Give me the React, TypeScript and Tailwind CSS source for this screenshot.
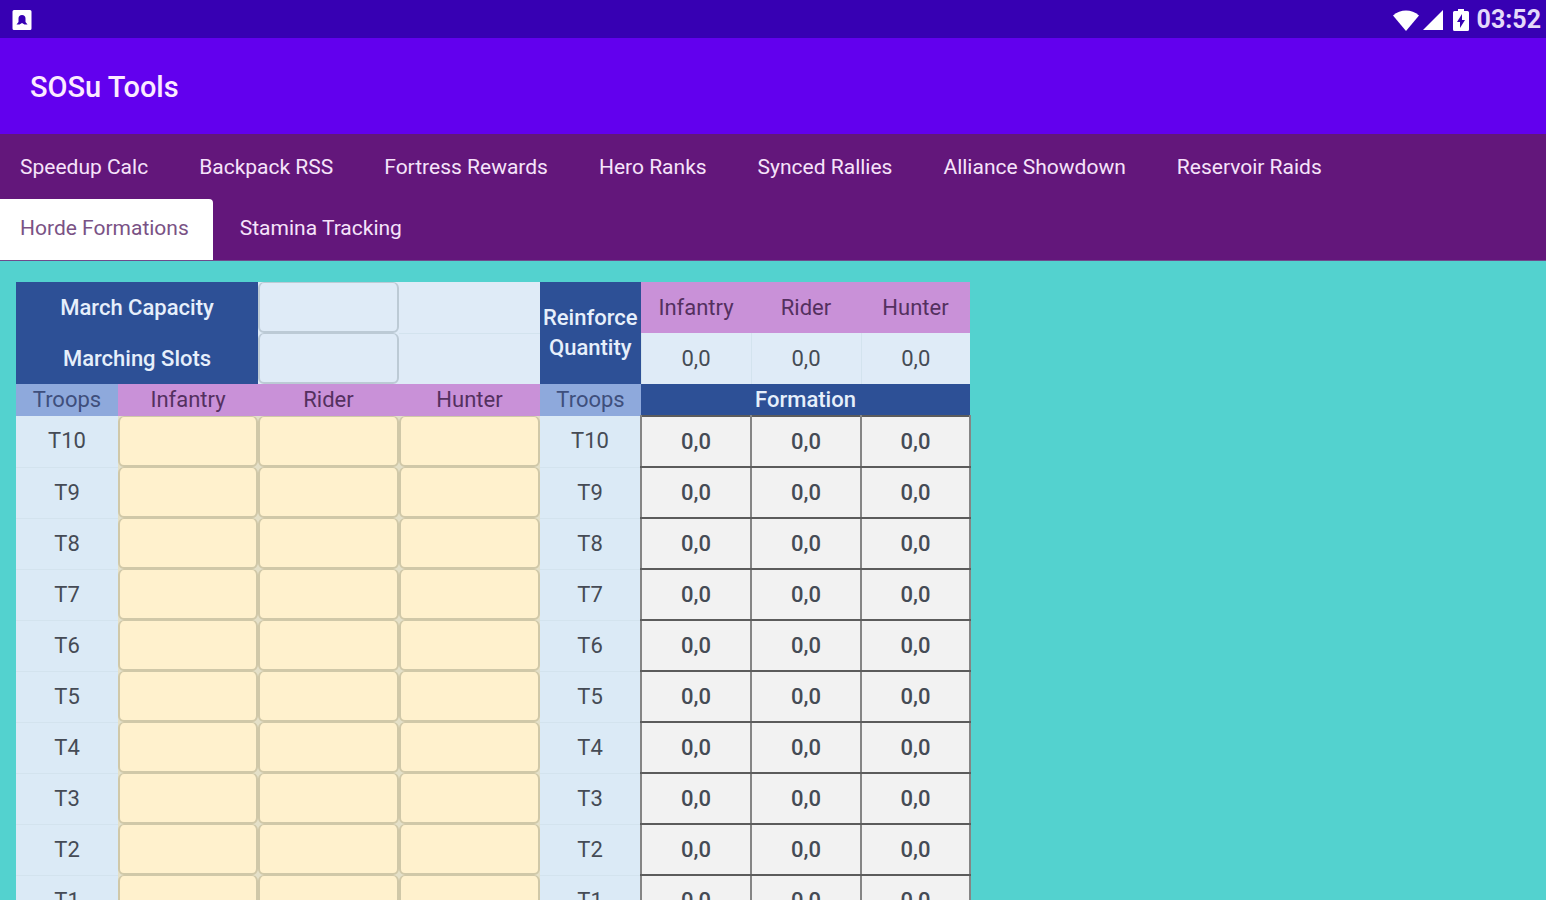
import React, { useState } from 'react';

const TABS = [
    'Speedup Calc',
    'Backpack RSS',
    'Fortress Rewards',
    'Hero Ranks',
    'Synced Rallies',
    'Alliance Showdown',
    'Reservoir Raids',
    'Horde Formations',
    'Stamina Tracking',
];

const TROOP_TYPES = ['Infantry', 'Rider', 'Hunter'];
const TIERS = ['T10', 'T9', 'T8', 'T7', 'T6', 'T5', 'T4', 'T3', 'T2', 'T1'];

function StatusBar() {
    return (
        <div className="flex h-[38px] shrink-0 items-center justify-between bg-[#3700b3] pt-0.5 pr-[5px] pl-3 text-white">
            <svg viewBox="0 0 20 20" className="h-5 w-5" fill="currentColor" aria-hidden="true">
                <path fillRule="evenodd" d="M2 0h16a1.500 1.500 0 0 1 1.500 1.500v17a1.500 1.500 0 0 1-1.500 1.500H2a1.500 1.500 0 0 1-1.500-1.500v-17A1.500 1.500 0 0 1 2 0zM10 5C7.800 5 6.500 6.500 6.500 8.500V12L4.500 14.500h3L10 13l2.500 1.500h3L13.500 12V8.500C13.500 6.500 12.200 5 10 5z" />
            </svg>
            <div className="flex items-center">
                <svg viewBox="0 0 26 21" className="h-[21px] w-[26px]" fill="currentColor" aria-hidden="true">
                    <path d="M0 5.500C7.500-1.200 18.500-1.200 26 5.500L13 21z" />
                </svg>
                <svg viewBox="0 0 20 20" className="ml-1 h-5 w-5" fill="currentColor" aria-hidden="true">
                    <path d="M20 0v20H0z" />
                </svg>
                <svg viewBox="0 0 16 22" className="ml-2.5 h-[22px] w-4" aria-hidden="true">
                    <path fill="currentColor" d="M5 0h6v2h3.500A1.500 1.500 0 0 1 16 3.500v17a1.500 1.500 0 0 1-1.500 1.500h-13A1.500 1.500 0 0 1 0 20.500v-17A1.500 1.500 0 0 1 1.500 2H5z" />
                    <path fill="#3700b3" d="M9 5 4 13h3v6l5-8H9z" />
                </svg>
                <span className="ml-2 text-[25px] leading-8 font-bold text-[#e4d9fa]">03:52</span>
            </div>
        </div>
    );
}

function TabBar({ active, onChange }: { active: string; onChange: (tab: string) => void }) {
    return (
        <nav className="flex shrink-0 flex-wrap gap-x-[7px] border-b border-[#6f4b8c] bg-[#63177b] pt-1">
            {TABS.map((tab) => (
                <button
                    key={tab}
                    type="button"
                    onClick={() => onChange(tab)}
                    className={
                        tab === active
                            ? 'h-[61px] rounded-tr-sm bg-white pr-6 pb-0.5 pl-5 text-[21px] text-[#7a5285]'
                            : 'h-[61px] pr-6 pb-0.5 pl-5 text-[21px] text-[#f6e3fa]'
                    }
                >
                    {tab}
                </button>
            ))}
        </nav>
    );
}

function HeaderInput({ id }: { id: string }) {
    return (
        <td className="p-0">
            <input
                id={id}
                type="text"
                inputMode="numeric"
                className="block h-[51px] w-full rounded-md border-2 border-t border-[#bccad5] bg-[#dfebf7] px-2 text-center outline-none"
            />
        </td>
    );
}

function FormationTable() {
    return (
        <table className="w-[954px] table-fixed border-collapse text-center text-[22px] leading-[30px] text-[#454b55]">
            <colgroup>
                <col className="w-[102px]" />
                <col className="w-[140px]" />
                <col className="w-[141px]" />
                <col className="w-[141px]" />
                <col className="w-[101px]" />
                <col className="w-[110px]" />
                <col className="w-[110px]" />
                <col className="w-[109px]" />
            </colgroup>
            <thead>
                <tr className="h-[51px] bg-[#dfebf7]">
                    <th colSpan={2} className="bg-[#2d5096] p-0 font-medium text-[#e6effb]">
                        <label htmlFor="march-capacity">March Capacity</label>
                    </th>
                    <HeaderInput id="march-capacity" />
                    <td className="border-b border-[#d3e3ee] p-0" />
                    <th rowSpan={2} className="bg-[#2d5096] p-0 font-medium text-[#e6effb]">
                        Reinforce Quantity
                    </th>
                    {TROOP_TYPES.map((type) => (
                        <th key={type} className="bg-[#c991d8] p-0 font-normal text-[#54305f]">
                            {type}
                        </th>
                    ))}
                </tr>
                <tr className="h-[51px] bg-[#dfebf7]">
                    <th colSpan={2} className="bg-[#2d5096] p-0 font-medium text-[#e6effb]">
                        <label htmlFor="marching-slots">Marching Slots</label>
                    </th>
                    <HeaderInput id="marching-slots" />
                    <td className="p-0" />
                    {TROOP_TYPES.map((type) => (
                        <td key={type} className="border-l border-[#d3e3ee] p-0">
                            0,0
                        </td>
                    ))}
                </tr>
                <tr className="h-8">
                    <th className="bg-[#8ea9dc] p-0 font-normal text-[#3e4f7c]">Troops</th>
                    {TROOP_TYPES.map((type) => (
                        <th key={type} className="bg-[#c991d8] p-0 font-normal text-[#54305f]">
                            {type}
                        </th>
                    ))}
                    <th className="bg-[#8ea9dc] p-0 font-normal text-[#3e4f7c]">Troops</th>
                    <th colSpan={3} className="bg-[#2d5096] p-0 font-medium text-[#e6effb]">
                        Formation
                    </th>
                </tr>
            </thead>
            <tbody>
                {TIERS.map((tier) => (
                    <tr key={tier} className="h-[51px]">
                        <th className="border-b border-[#d3e3ee] bg-[#dbeaf6] p-0 font-normal">{tier}</th>
                        {TROOP_TYPES.map((type) => (
                            <td key={type} className="bg-[#e4e0c8] p-0">
                                <input
                                    type="text"
                                    inputMode="numeric"
                                    aria-label={`${tier} ${type}`}
                                    className="block h-[51px] w-full rounded-md border-2 border-t border-[#d0c8a8] bg-[#fff1cd] px-2 text-center outline-none"
                                />
                            </td>
                        ))}
                        <th className="border-b border-[#d3e3ee] bg-[#dbeaf6] p-0 font-normal">{tier}</th>
                        {TROOP_TYPES.map((type) => (
                            <td key={type} className="border-2 border-x-[#858585] border-y-[#5c5c5c] bg-[#f2f2f2] p-0 font-medium">
                                0,0
                            </td>
                        ))}
                    </tr>
                ))}
            </tbody>
        </table>
    );
}

function App() {
    const [activeTab, setActiveTab] = useState<string>('Horde Formations');

    return (
        <div className="flex h-screen flex-col overflow-hidden bg-[#53d2cf] font-['Roboto',sans-serif]">
            <StatusBar />
            <header className="flex h-24 shrink-0 items-center bg-[#6200ee] px-[30px] pt-1">
                <h1 className="text-[29px] font-medium text-[#fbeaff]">SOSu Tools</h1>
            </header>
            <TabBar active={activeTab} onChange={setActiveTab} />
            <main className="min-h-0 flex-1 overflow-auto px-4 pt-[21px] [scrollbar-width:none]">
                <FormationTable />
            </main>
        </div>
    );
}

export default App;
